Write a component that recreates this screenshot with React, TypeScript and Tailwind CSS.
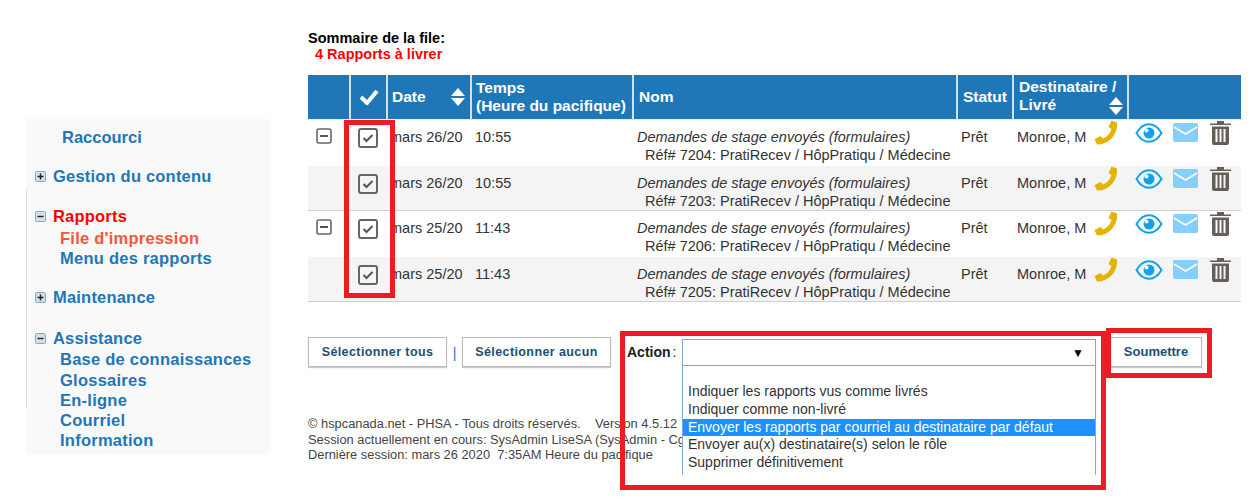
import React from 'react';

const rows = [
  { date: 'mars 26/20', time: '10:55', ref: '7204', grey: false, toggle: true },
  { date: 'mars 26/20', time: '10:55', ref: '7203', grey: true, toggle: false },
  { date: 'mars 25/20', time: '11:43', ref: '7206', grey: false, toggle: true },
  { date: 'mars 25/20', time: '11:43', ref: '7205', grey: true, toggle: false },
];

const actions = [
  'Indiquer les rapports vus comme livrés',
  'Indiquer comme non-livré',
  'Envoyer les rapports par courriel au destinataire par défaut',
  'Envoyer au(x) destinataire(s) selon le rôle',
  'Supprimer définitivement',
];

const columns = 'grid grid-cols-[41px_37px_84px_162px_324px_56px_115px_114px]';

const SortIcon = () => (
  <svg width="14" height="18" viewBox="0 0 14 18" fill="white">
    <path d="M7 0l7 8H0zM0 10h14l-7 8z" />
  </svg>
);

const CheckBox = () => (
  <svg width="20" height="20" viewBox="0 0 20 20" fill="none">
    <rect x="1" y="1" width="18" height="18" rx="2" stroke="#666" strokeWidth="2" />
    <path d="M5.500 10l3 3 6-6" stroke="#555" strokeWidth="2" />
  </svg>
);

const MinusBox = () => (
  <svg width="16" height="16" viewBox="0 0 16 16" fill="none">
    <rect x="1" y="1" width="14" height="14" rx="2" stroke="#666" strokeWidth="1.600" />
    <path d="M4 8h8" stroke="#555" strokeWidth="2" />
  </svg>
);

const Phone = () => (
  <svg width="25" height="25" viewBox="0 0 25 25" fill="#e6b400">
    <path d="M17.500 0.500l5.500 2c.6 7-2 12.500-6 16.500-3.500 3.500-8 5.500-14 5.500l-2.500-5.500 6-3 2.500 2.500c2-.8 3.800-2.200 5.300-3.800 1.500-1.700 2.500-3.600 3.200-5.700l-3-2z" />
  </svg>
);

const Eye = () => (
  <svg width="28" height="20" viewBox="0 0 28 20">
    <path d="M1.500 10C5 4 9 1.200 14 1.200S23 4 26.500 10C23 16 19 18.800 14 18.800S5 16 1.500 10z" fill="none" stroke="#0fa3ee" strokeWidth="2" />
    <circle cx="14" cy="10" r="5.500" fill="#0fa3ee" />
    <circle cx="11.500" cy="7.500" r="2" fill="white" />
  </svg>
);

const Mail = () => (
  <svg width="25" height="19" viewBox="0 0 25 19">
    <rect width="25" height="19" rx="2" fill="#84d0fb" />
    <path d="M1 4l11.500 7L24 4" fill="none" stroke="white" strokeWidth="1.500" />
  </svg>
);

const Trash = () => (
  <svg width="21" height="24" viewBox="0 0 21 24" fill="#665f57">
    <path d="M0 2.500h7V0h7v2.500h7V4H0z" />
    <path d="M2 5.500h17V22a2 2 0 0 1-2 2H4a2 2 0 0 1-2-2zM5.500 8v13h2V8zm4 0v13h2V8zm4 0v13h2V8z" fillRule="evenodd" />
  </svg>
);

const TreeBox = ({ open }: { open: boolean }) => (
  <svg width="11" height="11" viewBox="0 0 11 11" className="mr-[7px] shrink-0">
    <rect x="0.500" y="0.500" width="10" height="10" rx="1" fill="#d5dfe8" stroke="#8ca6bd" />
    <path d={open ? 'M2.500 5.500h6' : 'M2.500 5.500h6M5.500 2.500v6'} stroke="#222" strokeWidth="1.400" />
  </svg>
);

const SideHead = ({ label, open, active }: { label: string; open: boolean; active?: boolean }) => (
  <div className={`flex items-center pl-[9px] h-[20px] tracking-[0.2px] ${active ? 'text-[#ff0000]' : 'text-[#2077b8]'}`}>
    <TreeBox open={open} />
    {label}
  </div>
);

const SideLink = ({ label, active }: { label: string; active?: boolean }) => (
  <div className={`pl-[34px] h-[20.200px] leading-[20px] tracking-[0.25px] ${active ? 'text-[#f4573a]' : 'text-[#2077b8]'}`}>{label}</div>
);

export default function App() {
  return (
    <div className="relative w-[1253px] h-[504px] bg-white overflow-hidden flex font-['Liberation_Sans',Arial,sans-serif]">
      <aside className="w-[245px] h-[336px] ml-[26px] mt-[119px] bg-[#f9f9f9] font-bold text-[16.500px] shrink-0 pt-[8px]">
        <div className="pl-[36px] h-[20px] leading-[20px] text-[#2077b8]">Raccourci</div>
        <div className="mt-[19px]"><SideHead label="Gestion du contenu" open={false} /></div>
        <div className="mt-[20px]">
          <SideHead label="Rapports" open active />
          <div className="mt-[2px]">
            <SideLink label="File d'impression" active />
            <SideLink label="Menu des rapports" />
          </div>
        </div>
        <div className="mt-[19px]"><SideHead label="Maintenance" open={false} /></div>
        <div className="mt-[21px]">
          <SideHead label="Assistance" open />
          <div className="mt-[1px]">
            <SideLink label="Base de connaissances" />
            <SideLink label="Glossaires" />
            <SideLink label="En-ligne" />
            <SideLink label="Courriel" />
            <SideLink label="Information" />
          </div>
        </div>
      </aside>

      <main className="ml-[37px] w-[933px] shrink-0 pt-[30px]">
        <div className="h-[45px] text-[14.500px] font-bold leading-[16px]">
          <div className="text-black">Sommaire de la file:</div>
          <div className="text-[#ff0000] pl-[7px]">4 Rapports à livrer</div>
        </div>

        <div className={`${columns} h-[45px] bg-[#2077b8] text-white font-bold text-[15.500px] leading-[18px] border-b border-[#e8eef3]`}>
          <div />
          <div className="border-l-2 border-[#cfe0ee] flex items-center justify-center">
            <svg width="20" height="16" viewBox="0 0 20 16" fill="none">
              <path d="M2 8l6 6L18 2" stroke="white" strokeWidth="4" />
            </svg>
          </div>
          <div className="border-l-2 border-[#cfe0ee] flex items-center justify-between pl-[4px] pr-[5px]">
            Date
            <SortIcon />
          </div>
          <div className="border-l-2 border-[#cfe0ee] flex items-center pl-[4px] whitespace-nowrap">
            Temps
            <br />
            (Heure du pacifique)
          </div>
          <div className="border-l-2 border-[#cfe0ee] flex items-center pl-[5px]">Nom</div>
          <div className="border-l-2 border-[#cfe0ee] flex items-center pl-[5px]">Statut</div>
          <div className="border-l-2 border-[#cfe0ee] pl-[5px] pt-[3px] relative">
            Destinataire /
            <br />
            Livré
            <span className="absolute right-[4px] bottom-[4px] flex"><SortIcon /></span>
          </div>
          <div className="border-l-2 border-[#cfe0ee]" />
        </div>

        {rows.map((r) => (
          <div
            key={r.ref}
            className={`${columns} h-[45.500px] text-[14.500px] leading-[18px] text-[#333] ${r.grey ? 'bg-[#f4f4f4] border-b border-[#cfcfcf]' : 'bg-white'}`}
          >
            <div className="pl-[8px] pt-[8px]">{r.toggle && <MinusBox />}</div>
            <div className="pl-[9px] pt-[8px]"><CheckBox /></div>
            <div className="pl-[4px] pt-[8px] whitespace-nowrap">{r.date}</div>
            <div className="pl-[5px] pt-[8px]">{r.time}</div>
            <div className="pl-[5px] pt-[8px] whitespace-nowrap">
              <div className="italic">Demandes de stage envoyés (formulaires)</div>
              <div className="pl-[8px]">Réf# {r.ref}: PratiRecev / HôpPratiqu / Médecine</div>
            </div>
            <div className="pl-[5px] pt-[8px]">Prêt</div>
            <div className="pl-[5px] pt-[8px] flex items-start whitespace-nowrap">
              Monroe, M
              <span className="ml-[8px] -mt-[8px]"><Phone /></span>
            </div>
            <div className="pl-[8px] pt-[3px] flex items-start">
              <Eye />
              <span className="ml-[10px]"><Mail /></span>
              <span className="ml-[12px] -mt-[2px]"><Trash /></span>
            </div>
          </div>
        ))}

        <div className="flex items-start mt-[35px] text-[14px]">
          <button className="w-[139px] h-[30px] border border-[#bbb] font-bold text-[12.500px] tracking-[0.4px] text-[#1f4e70] shadow-[0_1px_1px_#ccc]">Sélectionner tous</button>
          <span className="w-[15px] h-[30px] leading-[32px] text-center text-[#2077b8]">|</span>
          <button className="w-[149px] h-[30px] border border-[#bbb] font-bold text-[12.500px] tracking-[0.4px] text-[#1f4e70] shadow-[0_1px_1px_#ccc]">Sélectionner aucun</button>
          <div className="ml-[16px] w-[55px] h-[30px] leading-[30px] text-[14px] text-[#222] whitespace-nowrap"><b>Action</b><span className="ml-[2px]">:</span></div>
          <div className="mt-[2px] relative z-10 w-[414px] h-[27px] border border-[#7ca7d8] bg-white flex items-center justify-end pr-[11px] text-[12px] text-black">▼</div>
          <button className="ml-[14px] w-[92px] h-[30px] border border-[#bbb] font-bold text-[13px] text-[#1f4e70] shadow-[0_1px_1px_#ccc]">Soumettre</button>
        </div>

        <div className="mt-[49px] text-[12.850px] leading-[15.500px] text-[#444] whitespace-pre">
          <div>{'© hspcanada.net - PHSA - Tous droits réservés.    Version 4.5.12'}</div>
          <div>Session actuellement en cours: SysAdmin LiseSA (SysAdmin - Cg)</div>
          <div>{'Dernière session: mars 26 2020  7:35AM Heure du pacifique'}</div>
        </div>
      </main>

      <div className="absolute left-[26px] top-[189px] w-[1px] h-[219px] bg-[#ddd]" />

      {/* menu ouvert du select, par-dessus le pied de page */}
      <div className="absolute left-[682px] top-[366px] w-[414px] h-[109px] bg-white border-x border-[#7ca7d8] pt-[17px] text-[14px] leading-[17.750px] text-[#333] overflow-hidden whitespace-nowrap">
        {actions.map((a, i) => (
          <div key={a} className={`pl-[5px] ${i === 2 ? 'bg-[#1e90ff] text-white' : ''}`}>{a}</div>
        ))}
      </div>

      {/* annotations rouges de la capture */}
      <div className="absolute left-[344px] top-[120px] w-[51px] h-[178px] border-[5px] border-[#ed1c24]" />
      <div className="absolute left-[620px] top-[331px] w-[486px] h-[159px] border-[5px] border-[#ed1c24]" />
      <div className="absolute left-[1106px] top-[328px] w-[106px] h-[50px] border-[5px] border-[#ed1c24]" />
    </div>
  );
}
